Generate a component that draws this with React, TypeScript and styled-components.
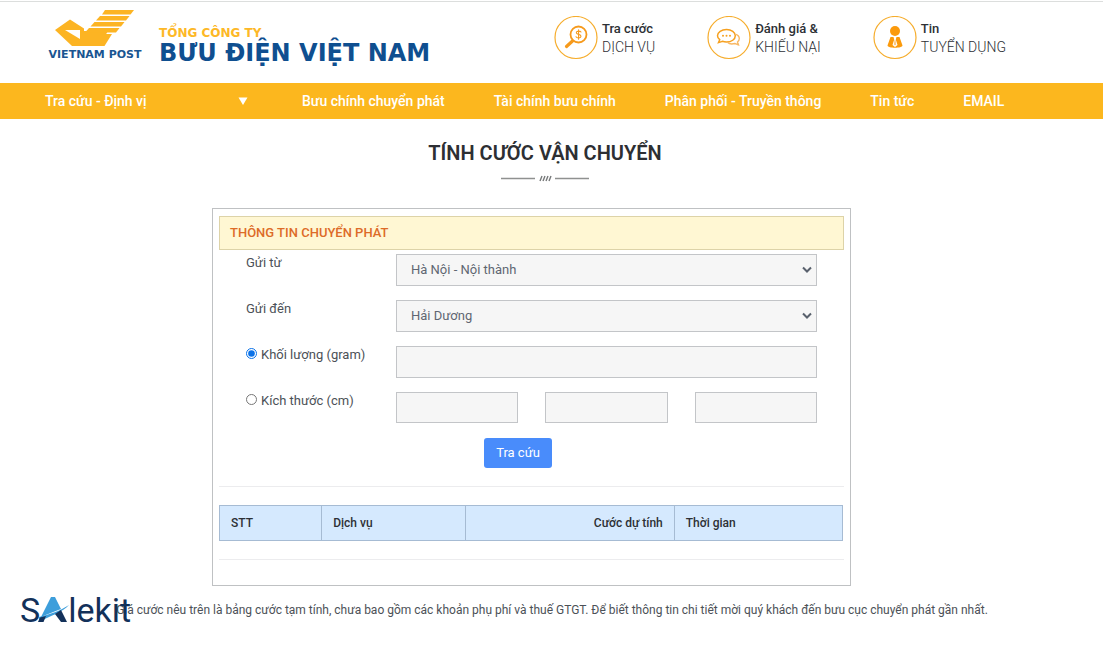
import React from "react";
import styled, { createGlobalStyle } from "styled-components";

const GlobalStyle = createGlobalStyle`
  *, *::before, *::after { box-sizing: border-box; }
  body {
    margin: 0;
    background: #fff;
    color: #4c5157;
    font-family: Roboto, "Liberation Sans", sans-serif;
    font-size: 13px;
    line-height: 20px;
  }
  a { color: inherit; text-decoration: none; }
`;

const Page = styled.div`
  position: relative;
  border-top: 1px solid #fff;
`;

const Header = styled.header`
  display: flex;
  align-items: flex-start;
  justify-content: space-between;
  gap: 40px;
  height: 82px;
  padding: 8px 97px 0 45px;
  border-top: 1px solid #dcdedd;
`;

const Brand = styled.a`
  display: flex;
  gap: 14px;
  white-space: nowrap;
`;

const BrandMark = styled.span`
  display: flex;
  flex-direction: column;
  align-items: center;
  width: 100px;
`;

const MarkName = styled.span`
  color: #1a5591;
  font: 700 11px/14px "DejaVu Sans", sans-serif;
`;

const BrandText = styled.span`
  display: flex;
  flex-direction: column;
  padding-top: 16px;
`;

const Company = styled.span`
  color: #fdb827;
  font: 700 12px/14px "DejaVu Sans", sans-serif;
`;

const CompanyName = styled.strong`
  color: #0f4f90;
  font: 700 24px/26px "DejaVu Sans", sans-serif;
`;

const QuickLinks = styled.nav`
  display: flex;
  gap: 52px;
  padding-top: 6px;
`;

const QuickLink = styled.a`
  display: flex;
  gap: 4px;
  white-space: nowrap;
`;

const QuickText = styled.span`
  display: flex;
  flex-direction: column;
  padding-top: 4px;
  color: #2d3035;
  line-height: 18px;
`;

const QuickStrong = styled.span`
  font-weight: 500;
`;

const QuickLight = styled.span`
  font-size: 14px;
  font-weight: 300;
`;

const Menu = styled.nav`
  display: flex;
  align-items: center;
  gap: 49px;
  height: 36px;
  padding: 0 0 0 45px;
  background: #fcb71e;
  color: #fff;
  font-size: 14px;
  font-weight: 500;
  white-space: nowrap;
`;

const MenuItem = styled.a<{ $wide?: boolean }>`
  display: flex;
  align-items: center;
  justify-content: space-between;
  min-width: ${(p) => (p.$wide ? "208px" : "0")};
  padding-right: ${(p) => (p.$wide ? "5px" : "0")};
`;

const Main = styled.main`
  display: flex;
  flex-direction: column;
  align-items: center;
  padding: 21px 13px 24px 0;
`;

const Title = styled.h1`
  margin: 0;
  color: #2d2f33;
  font-size: 20px;
  font-weight: 600;
  line-height: 26px;
`;

const Divider = styled.svg`
  margin: 6px 0 24px;
`;

const PanelWrap = styled.div`
  display: flex;
  justify-content: center;
  width: 100%;
  padding: 0 27px 0 0;
`;

const Panel = styled.section`
  width: 100%;
  max-width: 639px;
  padding: 7px 6px 25px;
  border: 1px solid #bfc1c3;
`;

const PanelTitle = styled.h2`
  margin: 0;
  padding: 6px 10px;
  border: 1px solid #ddd3a8;
  background: #fff7d3;
  color: #dd6b28;
  font-size: 13px;
  font-weight: 500;
  line-height: 20px;
`;

const Form = styled.form`
  display: flex;
  flex-direction: column;
  gap: 14px;
  padding: 4px 27px 18px;
  border-bottom: 1px solid #ececee;
`;

const Row = styled.div`
  display: grid;
  grid-template-columns: 150px 1fr;
  align-items: start;
  min-height: 32px;
`;

const Label = styled.label`
  display: flex;
  align-items: flex-start;
  line-height: 18px;
`;

const Radio = styled.input`
  width: 11px;
  height: 11px;
  margin: 2px 4px 0 0;
  accent-color: #0b72e8;
`;

const control = `
  width: 100%;
  min-width: 0;
  border: 1px solid #c3c5c8;
  border-radius: 0;
  background: #f6f6f6;
  color: #5f6672;
  font: 400 13px/20px Roboto, "Liberation Sans", sans-serif;
`;

const SelectBox = styled.div`
  display: grid;
  align-items: center;
  justify-items: end;
  & > * { grid-area: 1 / 1; }
`;

const Select = styled.select`
  ${control}
  appearance: none;
  height: 32px;
  padding: 0 28px 0 14px;
`;

const Caret = styled.svg`
  margin-right: 5px;
  pointer-events: none;
`;

const Input = styled.input<{ $short?: boolean }>`
  ${control}
  height: ${(p) => (p.$short ? "31px" : "32px")};
  padding: 0 14px;
`;

const Sizes = styled.div`
  display: grid;
  grid-template-columns: repeat(3, 1fr);
  gap: 27px;
`;

const Submit = styled.button`
  align-self: center;
  height: 30px;
  margin-right: 27px;
  padding: 0 12px;
  border: 0;
  border-radius: 3px;
  background: #498cfb;
  color: #fff;
  font: 400 13px/20px Roboto, "Liberation Sans", sans-serif;
`;

const TableArea = styled.div`
  padding: 18px 1px 18px 0;
  border-bottom: 1px solid #ececee;
`;

const Table = styled.table`
  width: 100%;
  border-collapse: collapse;
  table-layout: fixed;
`;

const Th = styled.th<{ $width: string; $end?: boolean }>`
  width: ${(p) => p.$width};
  height: 35px;
  padding: 0 11px;
  border: 1px solid #a6bbd3;
  background: #d5e9fe;
  color: #2d3035;
  font-size: 12px;
  font-weight: 500;
  text-align: ${(p) => (p.$end ? "right" : "left")};
`;

const Note = styled.p`
  margin: 14px 0 0;
  padding-left: 14px;
  font-size: 12px;
`;

const Watermark = styled.div`
  position: absolute;
  left: 20px;
  bottom: 17px;
  display: flex;
  align-items: center;
  color: #13315a;
  font-size: 34px;
  font-weight: 400;
  line-height: 34px;
`;

const WatermarkA = styled.svg`
  margin: 0 -2px 0 -2px;
`;

function PostMark() {
  return (
    <svg width="80" height="38" viewBox="0 0 80 38" aria-hidden="true">
      <g fill="#fcb423">
        <path d="M0 20 15 9.500 29 18.500 29 21H53L44 36H17Z" />
        <path d="M50 0H79L75.500 4.500H47Z" />
        <path d="M45 6H74.500L71 10.500H41Z" />
        <path d="M39.500 12H69.500L66 16.500H35.500Z" />
        <path d="M34 18H64.500L61 22.500H30Z" />
        <path d="M29 24H57L49.500 36H29Z" />
      </g>
      <path d="M10 20H25V29Z" fill="#fff" />
    </svg>
  );
}

function Round({ children }: { children: React.ReactNode }) {
  return (
    <svg width="44" height="44" viewBox="0 0 44 44" fill="none" aria-hidden="true">
      <circle cx="22" cy="21.500" r="21" stroke="#f6ad2d" strokeWidth="1.200" />
      {children}
    </svg>
  );
}

function PriceIcon() {
  return (
    <Round>
      <g stroke="#f69a1c" strokeLinecap="round">
        <circle cx="24.500" cy="18.500" r="8" strokeWidth="1.800" />
        <path d="M18.500 25 12.500 30.500" strokeWidth="3.200" />
        <path d="M27 16C26 14.700 22.300 14.700 22.300 16.700 22.300 18.900 27 17.900 27 20.300 27 22.400 23 22.400 22 20.800M24.600 13.700V23.300" strokeWidth="1.100" />
      </g>
    </Round>
  );
}

function ChatIcon() {
  return (
    <Round>
      <path d="M19.500 13.500C24.500 13.500 28.300 16.200 28.300 19.800S24.500 26 19.500 26C18 26 16.700 25.800 15.500 25.300L11.500 26.600 12.700 23.700C11.300 22.600 10.500 21.300 10.500 19.800 10.500 16.200 14.500 13.500 19.500 13.500Z" stroke="#f6a01f" strokeWidth="1.500" />
      <path d="M28.800 18.300C31 19 32.300 20.600 32.300 22.600 32.300 24 31.600 25.200 30.500 26L31.500 28.800 28 27.500C24.800 28.300 21.800 27.700 20.500 26.300" stroke="#f8b865" strokeWidth="1.400" />
      <g fill="#f6a01f">
        <circle cx="16" cy="19.800" r="1" />
        <circle cx="19.500" cy="19.800" r="1" />
        <circle cx="23" cy="19.800" r="1" />
      </g>
    </Round>
  );
}

function PersonIcon() {
  return (
    <Round>
      <g fill="#fb9a0c">
        <circle cx="22" cy="15" r="5" />
        <path d="M17.500 21H26.500L29.500 29.500C29.500 32.500 14.500 32.500 14.500 29.500Z" />
      </g>
      <path d="M20.500 21H23.500L22.800 23.500 24.500 29 22 31 19.500 29 21.200 23.500Z" fill="#fff" />
      <path d="M21.500 24H22.500L23.200 28.500 22 29.600 20.800 28.500Z" fill="#fbc880" />
    </Round>
  );
}

function SelectCaret() {
  return (
    <Caret width="10" height="8" viewBox="0 0 10 8" fill="none" aria-hidden="true">
      <path d="M1 1.500 5 5.500 9 1.500" stroke="#59616d" strokeWidth="2" />
    </Caret>
  );
}

const quickLinks = [
  { icon: <PriceIcon />, top: "Tra cước", bottom: "DỊCH VỤ" },
  { icon: <ChatIcon />, top: "Đánh giá &", bottom: "KHIẾU NẠI" },
  { icon: <PersonIcon />, top: "Tin", bottom: "TUYỂN DỤNG" },
];

const menu = [
  "Bưu chính chuyển phát",
  "Tài chính bưu chính",
  "Phân phối - Truyền thông",
  "Tin tức",
  "EMAIL",
];

export default function App() {
  return (
    <Page>
      <GlobalStyle />
      <Header>
        <Brand href="#">
          <BrandMark>
            <PostMark />
            <MarkName>VIETNAM POST</MarkName>
          </BrandMark>
          <BrandText>
            <Company>TỔNG CÔNG TY</Company>
            <CompanyName>BƯU ĐIỆN VIỆT NAM</CompanyName>
          </BrandText>
        </Brand>
        <QuickLinks>
          {quickLinks.map((q) => (
            <QuickLink href="#" key={q.top}>
              {q.icon}
              <QuickText>
                <QuickStrong>{q.top}</QuickStrong>
                <QuickLight>{q.bottom}</QuickLight>
              </QuickText>
            </QuickLink>
          ))}
        </QuickLinks>
      </Header>

      <Menu>
        <MenuItem href="#" $wide>
          Tra cứu - Định vị
          <svg width="10" height="8" viewBox="0 0 10 8" aria-hidden="true">
            <path d="M0.500 0.500H9.500L5 8Z" fill="#fff" />
          </svg>
        </MenuItem>
        {menu.map((m) => (
          <MenuItem href="#" key={m}>{m}</MenuItem>
        ))}
      </Menu>

      <Main>
        <Title>TÍNH CƯỚC VẬN CHUYỂN</Title>
        <Divider width="88" height="12" viewBox="0 0 88 12" fill="none" aria-hidden="true">
          <path d="M0 6.500H34M54 6.500H88" stroke="#8f9190" strokeWidth="1.400" />
          <path d="M39 9 41 4M42 9 44 4M45 9 47 4M48 9 50 4" stroke="#77797a" strokeWidth="1.400" />
        </Divider>

        <PanelWrap>
          <Panel>
            <PanelTitle>THÔNG TIN CHUYỂN PHÁT</PanelTitle>
            <Form onSubmit={(e) => e.preventDefault()}>
              <Row>
                <Label htmlFor="from">Gửi từ</Label>
                <SelectBox>
                  <Select id="from"><option>Hà Nội - Nội thành</option></Select>
                  <SelectCaret />
                </SelectBox>
              </Row>
              <Row>
                <Label htmlFor="to">Gửi đến</Label>
                <SelectBox>
                  <Select id="to"><option>Hải Dương</option></Select>
                  <SelectCaret />
                </SelectBox>
              </Row>
              <Row>
                <Label>
                  <Radio type="radio" name="mode" defaultChecked />
                  Khối lượng (gram)
                </Label>
                <Input aria-label="Khối lượng (gram)" />
              </Row>
              <Row>
                <Label>
                  <Radio type="radio" name="mode" />
                  Kích thước (cm)
                </Label>
                <Sizes>
                  <Input $short aria-label="Dài (cm)" />
                  <Input $short aria-label="Rộng (cm)" />
                  <Input $short aria-label="Cao (cm)" />
                </Sizes>
              </Row>
              <Submit type="submit">Tra cứu</Submit>
            </Form>
            <TableArea>
              <Table>
                <thead>
                  <tr>
                    <Th $width="16.400%">STT</Th>
                    <Th $width="23.100%">Dịch vụ</Th>
                    <Th $width="33.500%" $end>Cước dự tính</Th>
                    <Th $width="27%">Thời gian</Th>
                  </tr>
                </thead>
              </Table>
            </TableArea>
          </Panel>
        </PanelWrap>

        <Note>
          Giá cước nêu trên là bảng cước tạm tính, chưa bao gồm các khoản phụ phí và thuế GTGT. Để biết
          thông tin chi tiết mời quý khách đến bưu cục chuyển phát gần nhất.
        </Note>
      </Main>

      <Watermark>
        <span>S</span>
        <WatermarkA width="32" height="26" viewBox="0 0 32 26" aria-hidden="true">
          <path d="M13 0H17L23 12C17 14 10 17 3 20Z" fill="#3d9edb" />
          <path d="M1 20C12 17 22 14 31 8C25 15 12 19 1 25Z" fill="#3d9edb" />
          <path d="M17 17 23 13 29 25H23Z" fill="#13315a" />
          <path d="M0 25 2 20.500 8 19 5.500 25Z" fill="#13315a" />
        </WatermarkA>
        <span>lekit</span>
      </Watermark>
    </Page>
  );
}
